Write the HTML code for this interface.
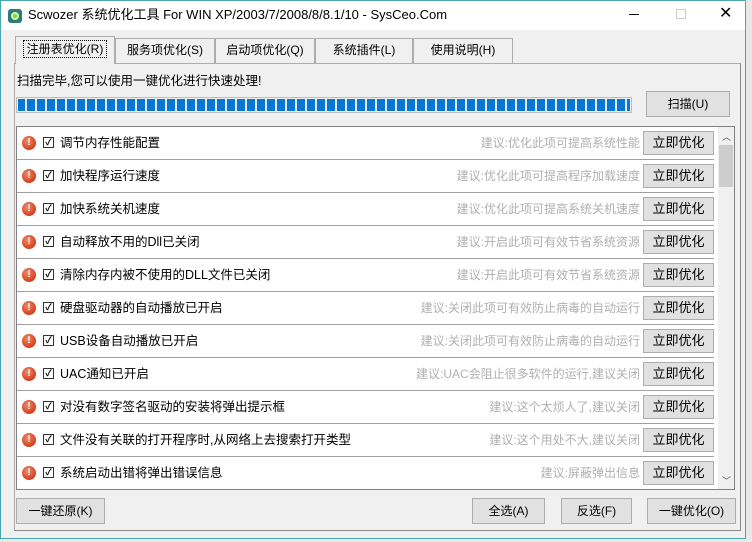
<!DOCTYPE html>
<html><head><meta charset="utf-8"><style>
*{margin:0;padding:0;box-sizing:border-box}
body{width:752px;height:542px;background:#e8e8e8;font-family:"Liberation Sans","Noto Sans CJK SC",sans-serif;font-size:12px;color:#000;position:relative;overflow:hidden;line-height:16px}
.win{position:absolute;left:0;top:0;width:746px;height:539px;background:#f0f0f0;border:1px solid #4aa6b0}
.title{position:absolute;left:0;top:0;width:744px;height:29px;background:#fff}
.abs{position:absolute}
.tab{position:absolute;top:37px;height:25px;border:1px solid #adadad;border-bottom:none;background:#f0f0f0;text-align:center;line-height:23px;font-size:12px}
.btn{position:absolute;border:1px solid #adadad;background:#e1e1e1;text-align:center;font-size:12px}
.row{position:absolute;left:16px;width:697px;height:33px;border-bottom:1px solid #a0a0a0}
.ic{position:absolute;left:5px;top:9px;width:14px;height:14px;border-radius:50%;background:radial-gradient(circle at 40% 35%,#f08a6a,#d2401e 70%);color:#fff;font-size:10px;font-weight:bold;line-height:14px;text-align:center}
.cb{position:absolute;left:26px;top:10px;width:11px;height:11px;border:1px solid #333;background:#fff;font-size:9px;line-height:9px;text-align:center;font-weight:bold}
.t{position:absolute;left:43px;top:8px;font-size:12.5px;line-height:16px}
.s{position:absolute;right:74px;top:8px;color:#b0b0b0;font-size:12px;line-height:16px}
.b{position:absolute;right:0;top:4px;width:71px;height:24px;border:1px solid #adadad;background:#e1e1e1;text-align:center;line-height:22px;font-size:13px}
</style></head><body>
<div class="win">
<div class="title">
 <div class="abs" style="left:7px;top:8px;width:14px;height:14px;border-radius:3px;background:#2f7a7a"><div style="margin:3px;width:8px;height:8px;border-radius:50%;background:#9c3;border:2px solid #cfa"></div></div>
 <div class="abs" style="left:27px;top:6px;font-size:13px">Scwozer 系统优化工具 For WIN XP/2003/7/2008/8/8.1/10 - SysCeo.Com</div>
 <div class="abs" style="left:628px;top:13px;width:10px;height:1px;background:#000"></div>
 <div class="abs" style="left:675px;top:8px;width:10px;height:10px;border:1px solid #ccc"></div>
 <div class="abs" style="left:718px;top:5px;font-size:16px">✕</div>
</div>
<div class="tab" style="left:14px;top:35px;height:28px;width:100px;line-height:25px;border-bottom:none;z-index:2"><span style="border:1px dotted #000;padding:1px 3px">注册表优化(R)</span></div>
<div class="tab" style="left:114px;width:100px">服务项优化(S)</div>
<div class="tab" style="left:214px;width:100px">启动项优化(Q)</div>
<div class="tab" style="left:314px;width:98px">系统插件(L)</div>
<div class="tab" style="left:412px;width:100px">使用说明(H)</div>
<div class="abs" style="left:13px;top:62px;width:727px;height:468px;border:1px solid #adadad;border-right-color:#888;border-bottom-color:#888"></div>
<div class="abs" style="left:16px;top:72px;font-size:12.5px">扫描完毕,您可以使用一键优化进行快速处理!</div>
<div class="abs" style="left:15px;top:96px;width:616px;height:16px;border:1px solid #bcbcbc;background:#e6e6e6;padding:1px;background-image:repeating-linear-gradient(90deg,#0678d4 0 8px,transparent 8px 10px);background-clip:content-box"></div>
<div class="btn" style="left:645px;top:90px;width:84px;height:26px;line-height:24px">扫描(U)</div>
<div class="abs" style="left:15px;top:125px;width:719px;height:364px;border:1px solid #828282;background:#fff"></div>
<div class="abs" style="left:717px;top:126px;width:16px;height:362px;background:#f0f0f0">
 <div style="position:absolute;left:4px;top:2px;font-size:9px;color:#555">︿</div>
 <div style="position:absolute;left:1px;top:18px;width:14px;height:42px;background:#cdcdcd"></div>
 <div style="position:absolute;left:4px;top:346px;font-size:9px;color:#555">﹀</div>
</div>
<div class="row" style="top:126px"><div class="ic">!</div><div class="cb">✓</div><div class="t">调节内存性能配置</div><div class="s">建议:优化此项可提高系统性能</div><div class="b">立即优化</div></div>
<div class="row" style="top:159px"><div class="ic">!</div><div class="cb">✓</div><div class="t">加快程序运行速度</div><div class="s">建议:优化此项可提高程序加载速度</div><div class="b">立即优化</div></div>
<div class="row" style="top:192px"><div class="ic">!</div><div class="cb">✓</div><div class="t">加快系统关机速度</div><div class="s">建议:优化此项可提高系统关机速度</div><div class="b">立即优化</div></div>
<div class="row" style="top:225px"><div class="ic">!</div><div class="cb">✓</div><div class="t">自动释放不用的Dll已关闭</div><div class="s">建议:开启此项可有效节省系统资源</div><div class="b">立即优化</div></div>
<div class="row" style="top:258px"><div class="ic">!</div><div class="cb">✓</div><div class="t">清除内存内被不使用的DLL文件已关闭</div><div class="s">建议:开启此项可有效节省系统资源</div><div class="b">立即优化</div></div>
<div class="row" style="top:291px"><div class="ic">!</div><div class="cb">✓</div><div class="t">硬盘驱动器的自动播放已开启</div><div class="s">建议:关闭此项可有效防止病毒的自动运行</div><div class="b">立即优化</div></div>
<div class="row" style="top:324px"><div class="ic">!</div><div class="cb">✓</div><div class="t">USB设备自动播放已开启</div><div class="s">建议:关闭此项可有效防止病毒的自动运行</div><div class="b">立即优化</div></div>
<div class="row" style="top:357px"><div class="ic">!</div><div class="cb">✓</div><div class="t">UAC通知已开启</div><div class="s">建议:UAC会阻止很多软件的运行,建议关闭</div><div class="b">立即优化</div></div>
<div class="row" style="top:390px"><div class="ic">!</div><div class="cb">✓</div><div class="t">对没有数字签名驱动的安装将弹出提示框</div><div class="s">建议:这个太烦人了,建议关闭</div><div class="b">立即优化</div></div>
<div class="row" style="top:423px"><div class="ic">!</div><div class="cb">✓</div><div class="t">文件没有关联的打开程序时,从网络上去搜索打开类型</div><div class="s">建议:这个用处不大,建议关闭</div><div class="b">立即优化</div></div>
<div class="row" style="top:456px;border-bottom:none"><div class="ic">!</div><div class="cb">✓</div><div class="t">系统启动出错将弹出错误信息</div><div class="s">建议:屏蔽弹出信息</div><div class="b">立即优化</div></div>
<div class="btn" style="left:15px;top:497px;width:89px;height:26px;line-height:24px">一键还原(K)</div>
<div class="btn" style="left:471px;top:497px;width:73px;height:26px;line-height:24px">全选(A)</div>
<div class="btn" style="left:560px;top:497px;width:71px;height:26px;line-height:24px">反选(F)</div>
<div class="btn" style="left:646px;top:497px;width:89px;height:26px;line-height:24px">一键优化(O)</div>
</div>
</body></html>
